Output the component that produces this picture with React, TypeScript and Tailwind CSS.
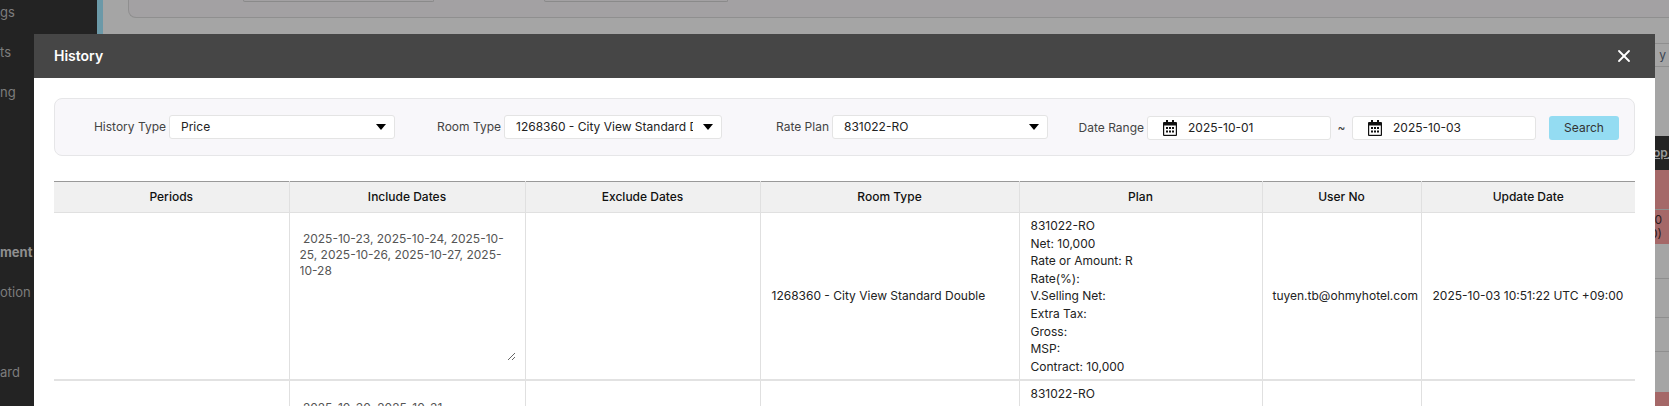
import { ChevronDown, X } from "lucide-react";

const sideItems = [
  { label: "gs", cls: "" },
  { label: "ts", cls: "" },
  { label: "ng", cls: "" },
  { label: "", cls: "" },
  { label: "", cls: "" },
  { label: "", cls: "" },
  { label: "ment", cls: "font-bold text-[#8f8f8f]" },
  { label: "otion", cls: "" },
  { label: "", cls: "" },
  { label: "ard", cls: "" },
];

const planLines = [
  "831022-RO",
  "Net: 10,000",
  "Rate or Amount: R",
  "Rate(%):",
  "V.Selling Net:",
  "Extra Tax:",
  "Gross:",
  "MSP:",
  "Contract: 10,000",
];

const headers = ["Periods", "Include Dates", "Exclude Dates", "Room Type", "Plan", "User No", "Update Date"];

function Arrow() {
  return (
    <svg viewBox="0 0 10 6" className="pointer-events-none absolute right-[9px] top-[9px] h-[6px] w-[10px]">
      <path d="M0 0h10L5 6z" fill="#000" />
    </svg>
  );
}

function CalendarIcon() {
  return (
    <svg viewBox="0 0 14 16" className="h-4 w-[14px] shrink-0">
      <rect x="3" y="0" width="2" height="3" fill="#111" />
      <rect x="9" y="0" width="2" height="3" fill="#111" />
      <path d="M1 2h12a1 1 0 0 1 1 1v12a1 1 0 0 1-1 1H1a1 1 0 0 1-1-1V3a1 1 0 0 1 1-1z" fill="#111" />
      <rect x="1.2" y="5.5" width="11.6" height="9.3" fill="#fff" />
      {[3, 6, 9].map((x) =>
        [7, 10.5].map((y) => <rect key={`${x}-${y}`} x={x} y={y} width="2" height="2" fill="#111" />),
      )}
    </svg>
  );
}

function Picker({ label, value, width, groupWidth }: { label: string; value: string; width: string; groupWidth: string }) {
  return (
    <div className={`flex items-center justify-end gap-[3px] ${groupWidth}`}>
      <span className="text-[#444]">{label}</span>
      <div className={`relative h-6 ${width}`}>
        <select className="h-6 w-full appearance-none rounded-[3px] border border-[#e4e4e4] bg-white pl-[11px] pr-[28px] text-[#222] outline-none">
          <option>{value}</option>
        </select>
        <Arrow />
      </div>
    </div>
  );
}

function DateBox({ value }: { value: string }) {
  return (
    <div className="flex h-6 w-[184px] items-center rounded-[3px] border border-[#e4e4e4] bg-white pl-[15px]">
      <CalendarIcon />
      <span className="ml-[11px] text-[#222]">{value}</span>
    </div>
  );
}

function HistoryRow({ dates, spaced }: { dates: string; spaced?: boolean }) {
  return (
    <tr className="border-b-2 border-[#e2e2e2] align-middle">
      <td className="border-r border-[#e0e0e0]"></td>
      <td className="border-r border-[#e0e0e0] px-[10px] py-[15px]">
        <textarea
          readOnly
          value={dates}
          className={`block w-[216px] resize text-[#555] outline-none ${spaced ? "h-[130px]" : "h-[130px]"} leading-4`}
        />
      </td>
      <td className="border-r border-[#e0e0e0]"></td>
      <td className="border-r border-[#e0e0e0] px-[11px] text-[#222]">1268360 - City View Standard Double</td>
      <td className="border-r border-[#e0e0e0] px-[11px] py-[4px] text-[#222]">
        {planLines.map((line) => (
          <div key={line} className="leading-[17.6px]">
            {line}
          </div>
        ))}
      </td>
      <td className="border-r border-[#e0e0e0] px-[10px] text-[#222]">tuyen.tb@ohmyhotel.com</td>
      <td className="px-[11px] text-[#222]">2025-10-03 10:51:22 UTC +09:00</td>
    </tr>
  );
}

export default function App() {
  return (
    <div className="relative flex h-[406px] w-[1669px] overflow-hidden bg-[#a5a5a5] font-['Inter',sans-serif] text-xs">
      {/* page behind the modal */}
      <aside className="w-[97px] shrink-0 overflow-hidden bg-[#232323] text-[13px] text-[#7d7d7d]">
        <div className="-mt-[7px]">
          {sideItems.map((item, i) => (
            <div key={i} className={`flex h-10 items-center whitespace-nowrap ${item.cls}`}>
              {item.label}
            </div>
          ))}
        </div>
      </aside>
      <div className="w-[6px] shrink-0 bg-[#6b99a8]"></div>
      <main className="min-w-0 flex-1">
        <div className="ml-[25px] flex h-[18px] gap-[110px] rounded-bl-lg border-b border-l border-[#8f8f8f] bg-[#a3a1a3] pl-[114px]">
          <div className="h-[2px] w-[191px] rounded-b border-b border-x border-[#8a8a8a]"></div>
          <div className="h-[2px] w-[184px] rounded-b border-b border-x border-[#8a8a8a]"></div>
        </div>
        <div className="mt-[25px] flex h-6 items-center justify-end border-y border-[#8f8f8f] pr-[3px] text-[#3c4654]">y</div>
        <div className="h-[69px]"></div>
        <div className="flex h-[34px] items-center justify-end whitespace-nowrap bg-[#232323] font-semibold text-[#9a9a9a] underline">
          <span className="w-[16px] overflow-hidden">op_</span>
        </div>
        <div className="h-10 border-b border-[#8f8f8f] bg-[#a56868]"></div>
        <div className="flex h-[34px] flex-col items-end justify-center bg-[#a56868] pr-[7px] leading-[14px] text-[#2b1c1c]">
          <span>00</span>
          <span>0)</span>
        </div>
        <div className="h-[35px] border-b border-[#8f8f8f]"></div>
        <div className="h-[39px] border-b border-[#8f8f8f]"></div>
        <div className="h-[34px] border-b border-[#8f8f8f]"></div>
        <div className="h-10"></div>
        <div className="h-5 bg-[#a56868]"></div>
      </main>

      {/* history modal */}
      <section className="absolute left-[34px] top-[34px] w-[1621px] bg-white">
        <header className="flex h-11 items-center justify-between bg-[#464646] pl-5 pr-[21px]">
          <h2 className="text-sm font-semibold text-white">History</h2>
          <X size={20} strokeWidth={2.2} className="text-white" />
        </header>
        <div className="px-5 pt-5">
          <div className="flex h-[58px] w-[1581px] items-center rounded-lg border border-[#e6e6e8] bg-[#f8f7fa]">
            <Picker label="History Type" value="Price" width="w-[226px]" groupWidth="w-[340px]" />
            <Picker label="Room Type" value="1268360 - City View Standard Double" width="w-[218px]" groupWidth="w-[327px]" />
            <Picker label="Rate Plan" value="831022-RO" width="w-[216px]" groupWidth="w-[326px]" />
            <div className="flex flex-1 items-center justify-end pr-[15px] pt-[1px]">
              <span className="mr-[3px] text-[#444]">Date Range</span>
              <DateBox value="2025-10-01" />
              <span className="w-[21px] text-center text-[#444]">~</span>
              <DateBox value="2025-10-03" />
              <button className="ml-[13px] mt-[1px] h-6 w-[70px] rounded-[3px] bg-[#94dcf2] text-[#333]">Search</button>
            </div>
          </div>
          <table className="mt-[25px] w-[1581px] table-fixed border-collapse text-left">
            <colgroup>
              <col className="w-[235px]" />
              <col className="w-[236px]" />
              <col className="w-[235px]" />
              <col className="w-[259px]" />
              <col className="w-[243px]" />
              <col className="w-[159px]" />
              <col className="w-[214px]" />
            </colgroup>
            <thead>
              <tr className="h-[31px] border-y border-t-[#999] border-b-[#e0e0e0] bg-[#f0f0f0]">
                {headers.map((h, i) => (
                  <th key={h} className={`text-center font-medium text-[#111] ${i < 6 ? "border-r border-[#e0e0e0]" : ""}`}>
                    {h}
                  </th>
                ))}
              </tr>
            </thead>
            <tbody>
              <HistoryRow spaced dates=" 2025-10-23, 2025-10-24, 2025-10-25, 2025-10-26, 2025-10-27, 2025-10-28" />
              <HistoryRow dates=" 2025-10-30, 2025-10-31" />
            </tbody>
          </table>
        </div>
      </section>
    </div>
  );
}
